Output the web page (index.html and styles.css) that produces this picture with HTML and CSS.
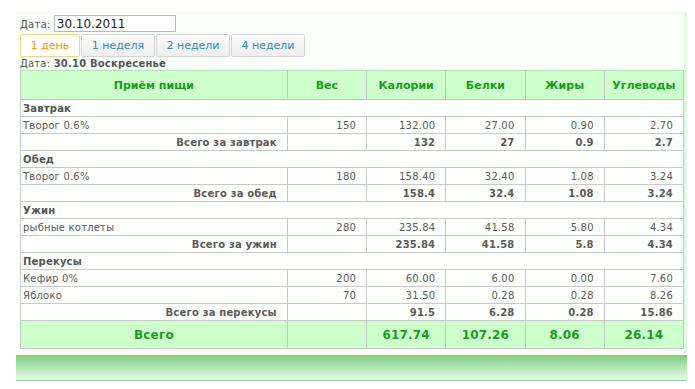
FILE: index.html
```html
<!DOCTYPE html>
<html lang="ru">
<head>
<meta charset="utf-8">
<link rel="stylesheet" href="styles.css">
</head>
<body>
<div class="panel">
  <div class="date-row"><span class="lbl">Дата:</span><input class="date-input" type="text" value="30.10.2011"></div>
  <div class="tabs">
    <span class="tab active">1 день</span>
    <span class="tab">1 неделя</span>
    <span class="tab">2 недели</span>
    <span class="tab">4 недели</span>
  </div>
  <div class="day">Дата: <b>30.10 Воскресенье</b></div>
  <table class="food">
    <colgroup>
      <col class="c-name"><col class="c-n"><col class="c-n"><col class="c-n"><col class="c-n"><col class="c-n">
    </colgroup>
    <thead>
      <tr><th>Приём пищи</th><th>Вес</th><th>Калории</th><th>Белки</th><th>Жиры</th><th>Углеводы</th></tr>
    </thead>
    <tbody>
      <tr class="sec"><td colspan="6">Завтрак</td></tr>
      <tr><td class="name">Творог 0.6%</td><td>150</td><td>132.00</td><td>27.00</td><td>0.90</td><td>2.70</td></tr>
      <tr class="sub"><td>Всего за завтрак</td><td></td><td>132</td><td>27</td><td>0.9</td><td>2.7</td></tr>
      <tr class="sec"><td colspan="6">Обед</td></tr>
      <tr><td class="name">Творог 0.6%</td><td>180</td><td>158.40</td><td>32.40</td><td>1.08</td><td>3.24</td></tr>
      <tr class="sub"><td>Всего за обед</td><td></td><td>158.4</td><td>32.4</td><td>1.08</td><td>3.24</td></tr>
      <tr class="sec"><td colspan="6">Ужин</td></tr>
      <tr><td class="name">рыбные котлеты</td><td>280</td><td>235.84</td><td>41.58</td><td>5.80</td><td>4.34</td></tr>
      <tr class="sub"><td>Всего за ужин</td><td></td><td>235.84</td><td>41.58</td><td>5.8</td><td>4.34</td></tr>
      <tr class="sec"><td colspan="6">Перекусы</td></tr>
      <tr><td class="name">Кефир 0%</td><td>200</td><td>60.00</td><td>6.00</td><td>0.00</td><td>7.60</td></tr>
      <tr><td class="name">Яблоко</td><td>70</td><td>31.50</td><td>0.28</td><td>0.28</td><td>8.26</td></tr>
      <tr class="sub"><td>Всего за перекусы</td><td></td><td>91.5</td><td>6.28</td><td>0.28</td><td>15.86</td></tr>
    </tbody>
    <tfoot>
      <tr><td>Всего</td><td></td><td>617.74</td><td>107.26</td><td>8.06</td><td>26.14</td></tr>
    </tfoot>
  </table>
</div>
<div class="footer-bar"></div>
</body>
</html>
```
FILE: styles.css
```css
html, body {
  margin: 0;
  padding: 0;
  background: #ffffff;
}
body {
  font-family: "DejaVu Sans", Verdana, sans-serif;
  font-size: 10px;
  color: #5a5a5a;
  padding: 12px 0 0 16px;
  width: 671px;
}
.panel {
  background: #f9fff9;
  border-top: 1px solid #f0f8f0;
  border-right: 3px solid #e2f7e2;
  padding: 1px 2px 4px 4px;
}
.date-row {
  display: flex;
  align-items: center;
  height: 19px;
}
.lbl {
  color: #555;
  font-size: 10px;
  letter-spacing: 0.3px;
  margin-right: 3px;
  margin-top: 2px;
}
.date-input {
  width: 116px;
  height: 15px;
  border: 1px solid #b9b9b9;
  padding: 0 2px;
  margin: 0;
  font-family: "DejaVu Sans", sans-serif;
  font-size: 12px;
  color: #222;
  background: #fff;
}
.tabs {
  display: flex;
  gap: 1px;
  margin-top: 1px;
}
.tab {
  height: 21px;
  line-height: 21px;
  border: 1px solid #d2d2d2;
  border-radius: 2px;
  background: linear-gradient(#fbfbfb, #eeeeee);
  color: #2a8ac0;
  font-size: 11px;
  text-align: center;
  width: 72px;
}
.tab.active {
  width: 58px;
  background: #fffef7;
  border-color: #eed58a;
  color: #e89a10;
}
.day {
  font-size: 10px;
  color: #555;
  margin-top: 1px;
  height: 12px;
  line-height: 12px;
  letter-spacing: 0.2px;
}
.day b {
  font-weight: bold;
}
.food {
  border-collapse: collapse;
  width: 664px;
  table-layout: fixed;
  background: #fcfffc;
  border: 1px solid #c4c4c4;
}
.c-name { width: 266px; }
.c-n { width: 79px; }
.food th {
  background: #ccffcc;
  color: #1c9a1c;
  font-size: 11px;
  font-weight: bold;
  height: 28px;
  border: 1px solid #c4c4c4;
  border-top: 1px solid #b8e0b8;
  padding: 0;
}
.food td {
  height: 16px;
  padding: 0 10px 0 2px;
  border: 1px solid #c8c8c8;
  text-align: right;
  white-space: nowrap;
  letter-spacing: 0.2px;
}
.food td.name {
  text-align: left;
}
.food tr.sec td {
  text-align: left;
  font-weight: bold;
  color: #555;
}
.food tr.sub td {
  font-weight: bold;
}
.food tfoot td {
  background: #ccffcc;
  color: #1c9a1c;
  font-weight: bold;
  font-size: 12px;
  height: 27px;
  text-align: center;
  padding: 0;
}
.footer-bar {
  margin-top: 2px;
  height: 25px;
  width: 671px;
  background: linear-gradient(#80cc80, #b8e8b8 55%, #e2fbe2);
  border-bottom: 1px solid #9ccf9c;
}
```
